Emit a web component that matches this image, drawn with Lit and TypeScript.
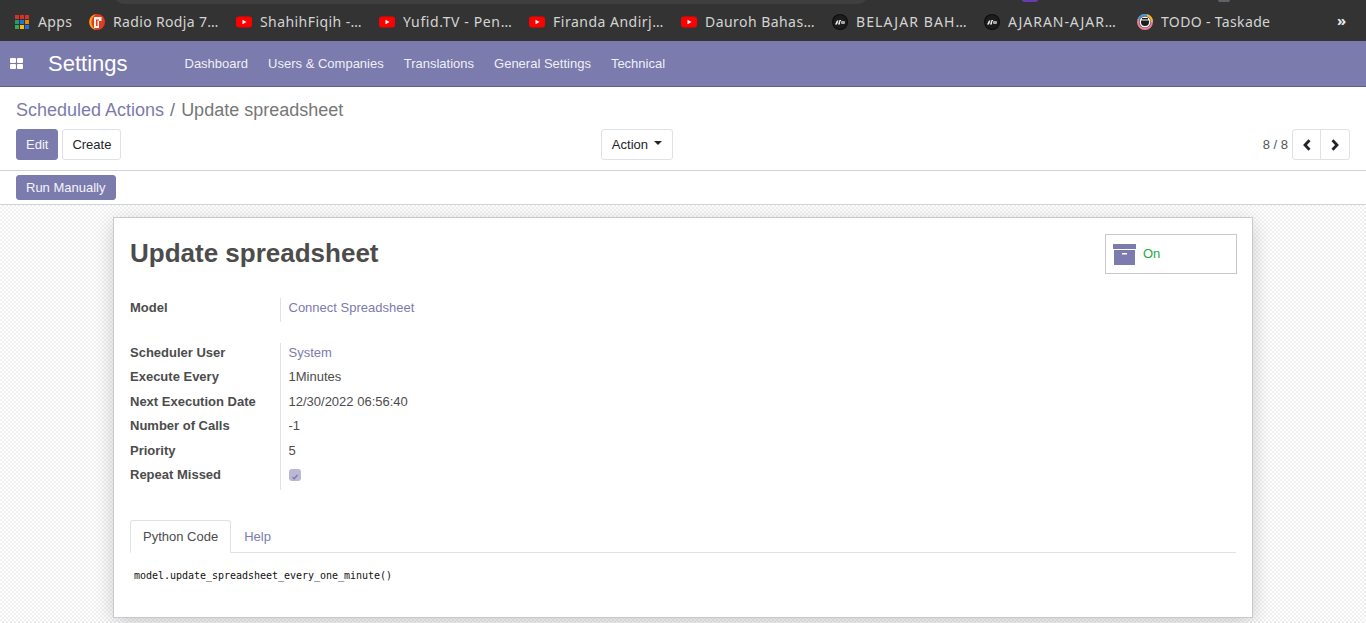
import { LitElement, css, html, svg } from 'lit';
import { customElement } from 'lit/decorators.js';

const youtube = svg`<rect x="0" y="2.500" width="16" height="11" rx="3" fill="#f00"/><path d="M6.500 5.800 10.500 8 6.500 10.200z" fill="#fff"/>`;
const disc = svg`<circle cx="8" cy="8" r="8" fill="#0c0c0c"/><circle cx="8" cy="8" r="7" fill="#1c1c1c"/><path d="M3 10.500 5 6.500h1.500L5 10.500zM6 10.500 7.500 6h1.800l-.4 1H8.400L7.800 10.500z" fill="#f2f2f2"/><rect x="9" y="7" width="4" height="3" rx="1" fill="#a8a8a8"/>`;
const rodja = svg`<circle cx="8" cy="8" r="8" fill="#e33b22"/><path d="M7 .1A8 8 0 0 0 7 15.900C3.500 13.500 2.500 11 2.500 8S4 2.500 7 .1z" fill="#f5a623"/><path d="M5 3h7.500v4H10v7H5z" fill="#fff3e6"/><path d="M7 5.500h3v1H8.500V12H7z" fill="#e33b22"/>`;
const taskade = svg`<circle cx="8" cy="8" r="7" fill="none" stroke="#ea7f96" stroke-width="2"/><path d="M1.600 5A7 7 0 0 1 10 1.300" fill="none" stroke="#3f9ad6" stroke-width="2"/><path d="M10 1.300A7 7 0 0 1 15 8" fill="none" stroke="#f0b92a" stroke-width="2"/><circle cx="8" cy="8" r="5.500" fill="#f4f4f4"/><path d="M4 6.500h8v1.500a4 4 0 0 1-8 0z" fill="#1d1d1d"/><rect x="5" y="4" width="6" height="1.500" fill="#1d1d1d"/>`;

const bookmarks = [
  { icon: rodja, label: 'Radio Rodja 7…', width: 106, spacing: 0.35 },
  { icon: youtube, label: 'ShahihFiqih -…', width: 102, spacing: 0.43 },
  { icon: youtube, label: 'Yufid.TV - Pen…', width: 109, spacing: 0.62 },
  { icon: youtube, label: 'Firanda Andirj…', width: 111, spacing: 0.5 },
  { icon: youtube, label: 'Dauroh Bahas…', width: 110, spacing: 0.45 },
  { icon: disc, label: 'BELAJAR BAH…', width: 111, spacing: 1.1 },
  { icon: disc, label: 'AJARAN-AJAR…', width: 112, spacing: 0.95 },
  { icon: taskade, label: 'TODO - Taskade', width: 110, spacing: 0.35 },
];

const appsColors = ['#d93025', '#d93025', '#d93025', '#1e9e6a', '#1a73e8', '#ea8600', '#34a853', '#fbbc04', '#1a73e8'];

@customElement('browser-bar')
class BrowserBar extends LitElement {
  static styles = css`
    :host {
      display: block;
      position: relative;
      height: 41px;
      background: #333333;
      overflow: hidden;
      font-family: 'Noto Sans', sans-serif;
      font-size: 14px;
      letter-spacing: 0.35px;
      color: #d4d4d4;
    }
    .omnibox {
      position: absolute;
      left: 113px;
      top: -20px;
      width: 756px;
      height: 24px;
      border-radius: 12px;
      background: #3f3f3f;
    }
    .badge {
      position: absolute;
      top: -9px;
      height: 11px;
      border-radius: 2px;
    }
    .badge.purple { left: 1022px; width: 16px; background: #6a3ab2; }
    .badge.grey { left: 1218px; width: 12px; background: #5f6368; }
    .row {
      display: flex;
      align-items: center;
      height: 44px;
      padding-left: 15px;
    }
    .apps {
      display: grid;
      grid-template-columns: repeat(3, 4px);
      grid-auto-rows: 4px;
      gap: 1px;
      margin-right: 9px;
    }
    .apps i { display: block; }
    .mark {
      display: flex;
      align-items: center;
      flex: none;
      margin-right: 17px;
    }
    .mark svg { flex: none; margin-right: 8px; }
    .mark span { white-space: nowrap; overflow: hidden; }
    .first { width: 35px; margin-right: 16px; white-space: nowrap; }
    .more {
      position: absolute;
      left: 1337px;
      top: 11px;
      font-size: 15px;
      font-weight: 700;
      color: #e8e8e8;
    }
  `;

  render() {
    return html`
      <div class="omnibox"></div>
      <div class="badge purple"></div>
      <div class="badge grey"></div>
      <div class="row">
        <div class="apps">
          ${appsColors.map((c) => html`<i style="background:${c}"></i>`)}
        </div>
        <span class="first">Apps</span>
        ${bookmarks.map(
          (b) => html`<div class="mark" style="width:${b.width + 24}px">
            <svg width="16" height="16" viewBox="0 0 16 16">${b.icon}</svg>
            <span style="letter-spacing:${b.spacing}px">${b.label}</span>
          </div>`,
        )}
      </div>
      <div class="more">»</div>
    `;
  }
}

@customElement('app-root')
class AppRoot extends LitElement {
  static styles = css`
    :host {
      display: block;
      height: 623px;
      overflow: hidden;
      font-family: 'Liberation Sans', Arial, sans-serif;
      font-size: 13px;
      line-height: 19.5px;
      color: #4c4c4c;
      background: #fff;
    }
    a { color: #7c7bad; text-decoration: none; }

    .navbar {
      display: flex;
      align-items: center;
      height: 45px;
      background: #7c7bad;
      border-bottom: 1px solid #5f5e97;
      color: rgba(255, 255, 255, 0.9);
    }
    .launcher {
      display: grid;
      grid-template-columns: repeat(2, 6px);
      grid-auto-rows: 5px;
      gap: 1px;
      margin-left: 10px;
      margin-right: 25px;
    }
    .launcher i { display: block; background: #fff; border-radius: 1px; }
    .brand { font-size: 22px; margin-right: 57px; color: #fff; }
    .menu { display: flex; gap: 20px; }

    .control {
      height: 83px;
      padding: 0 16px;
      border-bottom: 1px solid #ced4da;
    }
    .crumbs {
      padding-top: 12px;
      height: 30px;
      font-size: 18px;
      line-height: 22px;
      color: #777;
      white-space: pre;
    }
    .crumbs .sep { color: #6c757d; margin: 0 6px; }
    .tools {
      display: grid;
      grid-template-columns: 1fr 1fr;
      gap: 20px;
    }
    .left { display: flex; justify-content: space-between; }
    .right { display: flex; justify-content: flex-end; align-items: center; }
    .btn {
      display: inline-flex;
      align-items: center;
      justify-content: center;
      height: 31px;
      box-sizing: border-box;
      padding: 0 9px;
      border: 1px solid #dee2e6;
      border-radius: 3px;
      background: #fff;
      color: #212529;
    }
    .btn.primary {
      background: #7c7bad;
      border-color: #7c7bad;
      color: #f4f4fa;
    }
    .btn.action { padding: 0 10px; }
    .btn-group { display: flex; gap: 4px; }
    .caret {
      display: inline-block;
      margin-left: 6px;
      margin-top: -3px;
      border-top: 4px solid #212529;
      border-left: 4px solid transparent;
      border-right: 4px solid transparent;
    }
    .pager { margin-right: 4px; color: #555; }
    .pager-btns { display: flex; }
    .pager-btns .btn { width: 29px; padding: 0; border-radius: 3px 0 0 3px; }
    .pager-btns .btn + .btn { width: 30px; margin-left: -1px; border-radius: 0 3px 3px 0; }

    .statusbar {
      height: 34px;
      padding: 4px 16px 0;
      box-sizing: border-box;
      border-bottom: 1px solid #ced4da;
    }
    .btn.run { height: 25px; }

    .body {
      height: 418px;
      padding-top: 12px;
      box-sizing: border-box;
      background-color: #fff;
      background-image: conic-gradient(#f0f0f0 25%, #fff 0 50%, #f0f0f0 0 75%, #fff 0);
      background-size: 4px 4px;
    }
    .sheet {
      width: 1140px;
      height: 401px;
      margin-left: 113px;
      box-sizing: border-box;
      padding: 16px;
      background: #fff;
      border: 1px solid #c8c8d0;
      box-shadow: 0 5px 20px -1px rgba(0, 0, 0, 0.2);
    }
    .head { display: flex; justify-content: space-between; align-items: flex-start; }
    h1 {
      margin: 0;
      padding-top: 4px;
      font-size: 26px;
      line-height: 31px;
      font-weight: 700;
      color: #4c4c4c;
    }
    .toggle {
      display: flex;
      align-items: center;
      box-sizing: border-box;
      width: 132px;
      height: 40px;
      margin-right: -1px;
      padding-left: 7px;
      gap: 7px;
      border: 1px solid #c8c8c8;
      color: #28a745;
    }
    .group.model { margin-top: 23.5px; }
    .group.schedule { margin-top: 20.5px; }
    .field { display: flex; }
    .field label {
      width: 150px;
      flex: none;
      font-weight: 700;
      border-right: 1px solid #dee2e6;
      padding-bottom: 5px;
    }
    .field .value { padding: 0 0 5px 7.5px; display: flex; align-items: center; }
    .check {
      display: block;
      width: 12px;
      height: 12px;
      margin-left: 0.5px;
      border-radius: 3px;
      background: #b9b8d5;
    }
    .tabs {
      display: flex;
      height: 32px;
      border-bottom: 1px solid #dee2e6;
      margin-top: 30.5px;
    }
    .tab {
      height: 33px;
      box-sizing: border-box;
      padding: 6px 12px;
      border: 1px solid transparent;
    }
    .tab.active {
      border-color: #dee2e6;
      border-bottom-color: #fff;
      border-radius: 3px 3px 0 0;
      background: #fff;
    }
    pre {
      margin: 14px 0 0 4px;
      font-family: 'DejaVu Sans Mono', monospace;
      font-size: 10px;
      line-height: 18px;
      letter-spacing: -0.02px;
      color: #111;
    }
  `;

  render() {
    const fields = [
      ['Scheduler User', html`<a href="#">System</a>`],
      ['Execute Every', '1Minutes'],
      ['Next Execution Date', '12/30/2022 06:56:40'],
      ['Number of Calls', '-1'],
      ['Priority', '5'],
      [
        'Repeat Missed',
        html`<span class="check">
          <svg width="12" height="12" viewBox="0 0 12 12">
            <path d="M3.500 6.300 5.200 7.800 8.500 4" fill="none" stroke="#7c7bad" stroke-width="1.500" />
          </svg>
        </span>`,
      ],
    ];

    return html`
      <browser-bar></browser-bar>
      <nav class="navbar">
        <div class="launcher"><i></i><i></i><i></i><i></i></div>
        <span class="brand">Settings</span>
        <div class="menu">
          <span>Dashboard</span>
          <span>Users &amp; Companies</span>
          <span>Translations</span>
          <span>General Settings</span>
          <span>Technical</span>
        </div>
      </nav>

      <div class="control">
        <div class="crumbs"><a href="#">Scheduled Actions</a><span class="sep">/</span>Update spreadsheet</div>
        <div class="tools">
          <div class="left">
            <div class="btn-group">
              <span class="btn primary">Edit</span>
              <span class="btn">Create</span>
            </div>
            <span class="btn action">Action<i class="caret"></i></span>
          </div>
          <div class="right">
            <span class="pager">8 / 8</span>
            <div class="pager-btns">
              <span class="btn">
                <svg width="10" height="12" viewBox="0 0 10 12">
                  <path d="M7.500 1.200 3 6l4.500 4.800" fill="none" stroke="#212529" stroke-width="2.800" />
                </svg>
              </span>
              <span class="btn">
                <svg width="10" height="12" viewBox="0 0 10 12">
                  <path d="M2.500 1.200 7 6l-4.500 4.800" fill="none" stroke="#212529" stroke-width="2.800" />
                </svg>
              </span>
            </div>
          </div>
        </div>
      </div>

      <div class="statusbar"><span class="btn primary run">Run Manually</span></div>

      <div class="body">
        <div class="sheet">
          <div class="head">
            <h1>Update spreadsheet</h1>
            <div class="toggle">
              <svg width="23" height="21" viewBox="0 0 23 21">
                <path d="M0 0h23v5H0z" fill="#7c7bad" />
                <path d="M1 6h21v15H1z" fill="#7c7bad" />
                <path d="M9 9h5v1.500H9z" fill="#fff" />
              </svg>
              <span>On</span>
            </div>
          </div>
          <div class="group model">
            <div class="field">
              <label>Model</label>
              <div class="value"><a href="#">Connect Spreadsheet</a></div>
            </div>
          </div>
          <div class="group schedule">
            ${fields.map(
              ([name, value]) => html`<div class="field">
                <label>${name}</label>
                <div class="value">${value}</div>
              </div>`,
            )}
          </div>
          <div class="tabs">
            <div class="tab active">Python Code</div>
            <div class="tab"><a href="#">Help</a></div>
          </div>
          <pre>model.update_spreadsheet_every_one_minute()</pre>
        </div>
      </div>
    `;
  }
}
